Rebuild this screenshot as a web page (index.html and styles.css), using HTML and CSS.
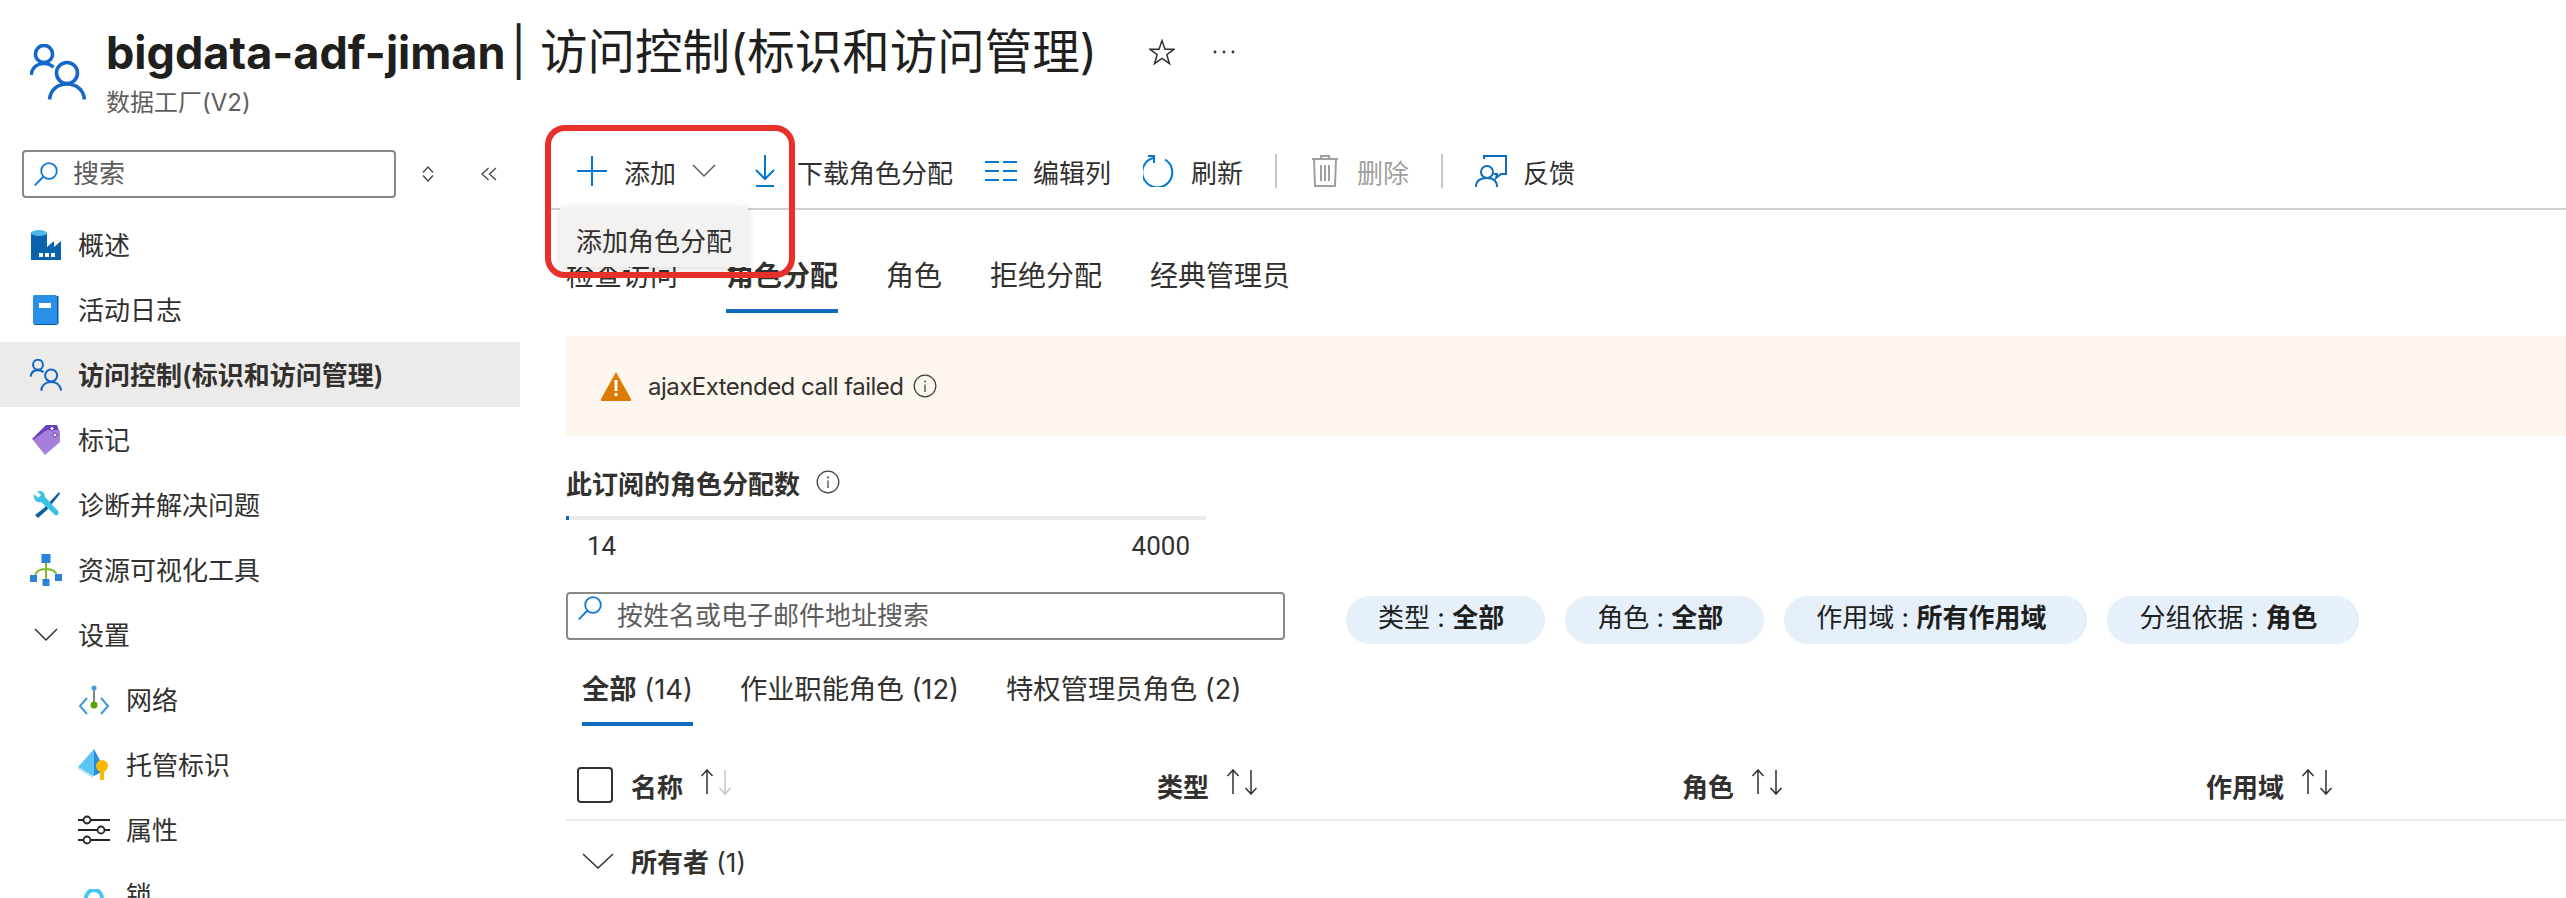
FILE: index.html
```html
<!DOCTYPE html>
<html lang="zh-CN">
<head>
<meta charset="utf-8">
<title>bigdata-adf-jiman | 访问控制(标识和访问管理)</title>
<link rel="stylesheet" href="styles.css">
</head>
<body>
<svg class="defs" width="0" height="0" aria-hidden="true">
  <symbol id="people" viewBox="0 0 56 56">
    <g fill="none" stroke="#1267c9" stroke-width="3.6" stroke-linecap="butt">
      <circle cx="14" cy="10" r="8.6"/>
      <path d="M1 31c1-7 6-11.500 13-11.500 4 0 7 1.300 9.500 3.800"/>
      <circle cx="37" cy="29" r="10.500"/>
      <path d="M19.500 55.500c1-9.500 8-15.500 17.500-15.500s16.500 6 17.500 15.500"/>
    </g>
  </symbol>
  <symbol id="mag" viewBox="0 0 24 24">
    <g fill="none" stroke="#0f78d4" stroke-width="1.800">
      <circle cx="15" cy="9" r="7.800"/>
      <path d="M9.500 14.500 .8 23.400"/>
    </g>
  </symbol>
  <symbol id="info" viewBox="0 0 24 24">
    <circle cx="12" cy="12" r="10.800" fill="none" stroke="#444" stroke-width="1.300"/>
    <path d="M12 10.500v7.500" stroke="#444" stroke-width="1.300"/>
    <circle cx="12" cy="7.500" r="1" fill="#444"/>
  </symbol>
  <symbol id="sort" viewBox="0 0 34 26">
    <path d="M8 25V1M2.500 7 8 1l5.500 6" fill="none" stroke="#323130" stroke-width="1.500"/>
    <path d="M26 1v24M20.500 19 26 25l5.500-6" fill="none" stroke="#323130" stroke-width="1.500"/>
  </symbol>
  <symbol id="sortdim" viewBox="0 0 34 26">
    <path d="M8 25V1M2.500 7 8 1l5.500 6" fill="none" stroke="#323130" stroke-width="1.500"/>
    <path d="M26 1v24M20.500 19 26 25l5.500-6" fill="none" stroke="#c8c6c4" stroke-width="1.500"/>
  </symbol>
</svg>

<div class="page">
  <header class="head">
    <svg class="head-icon"><use href="#people"/></svg>
    <div class="head-text">
      <div class="title-row">
        <h1 class="title"><b>bigdata-adf-jiman</b> | 访问控制(标识和访问管理)</h1>
        <svg class="star" viewBox="0 0 26 27"><path d="M13 1.500l3 8.700h9l-7.200 5.500 2.700 9L13 19.300l-7.500 5.400 2.700-9L1 10.200h9z" fill="none" stroke="#323130" stroke-width="1.500"/></svg>
        <svg class="dots" viewBox="0 0 22 4"><circle cx="2" cy="2" r="1.400"/><circle cx="11" cy="2" r="1.400"/><circle cx="20" cy="2" r="1.400"/></svg>
      </div>
      <div class="subtitle">数据工厂(V2)</div>
    </div>
  </header>

  <div class="columns">
    <aside class="side">
      <div class="side-search-row">
        <div class="searchbox side-search">
          <svg class="mag"><use href="#mag"/></svg>
          <span class="ph">搜索</span>
        </div>
        <svg class="updown" viewBox="0 0 12 16"><path d="M1 6.500 6 1l5 5.500M1 9.500 6 15l5-5.500" fill="none" stroke="#444" stroke-width="1.300"/></svg>
        <svg class="collapse" viewBox="0 0 16 14"><path d="M7.500 1 1 7l6.500 6M15 1 8.500 7l6.500 6" fill="none" stroke="#444" stroke-width="1.300"/></svg>
      </div>
      <nav class="nav">
        <a class="nav-item">
          <span class="nav-icon"><svg width="30" height="30" viewBox="0 0 30 30"><path d="M0 3v27h30V11l-7 6v-6l-7 6V3z" fill="#0a62ac"/><ellipse cx="8" cy="3" rx="8" ry="3" fill="#4fb8e6"/><path d="M8 23h4v4H8zm6 0h4v4h-4zm6 0h4v4h-4z" fill="#fff"/></svg></span>概述
        </a>
        <a class="nav-item">
          <span class="nav-icon"><svg width="26" height="30" viewBox="0 0 26 30"><rect x="0" y="0" width="24" height="29" rx="1.500" fill="#2a8fe6"/><path d="M24 1h1.500v28l-2 1H1v-1h23z" fill="#0c5ba8"/><rect x="6" y="8" width="12" height="5" fill="#fff"/></svg></span>活动日志
        </a>
        <a class="nav-item active">
          <span class="nav-icon"><svg width="32" height="32"><use href="#people"/></svg></span>访问控制(标识和访问管理)
        </a>
        <a class="nav-item">
          <span class="nav-icon"><svg width="28" height="30" viewBox="0 0 28 30"><path d="M0 14 14 0h11l2 6L12 22z" fill="#6b3fc4"/><path d="M1 15 15 5h11c2 0 2 1 2 2v10L13 30z" fill="#a67fdc"/><circle cx="20" cy="3.500" r="2" fill="#fff" stroke="#5a32ad"/><circle cx="23" cy="10" r="2" fill="#fff" stroke="#5a32ad"/></svg></span>标记
        </a>
        <a class="nav-item">
          <span class="nav-icon"><svg width="28" height="28" viewBox="0 0 28 28"><path d="M27 1 12 17l-9 7 3 3 9-8L28 3z" fill="#0d639f"/><path d="M2 3l4 4 3-3-4-4c4-1 8 1 8 6l13 14c2 2-1 6-3 4L9 11C4 12 1 8 2 3z" fill="#3cc0e4"/></svg></span>诊断并解决问题
        </a>
        <a class="nav-item">
          <span class="nav-icon"><svg width="32" height="32" viewBox="0 0 32 32"><path d="M16 8v18M5 22c1-6 6-7 11-7s10 1 11 7" fill="none" stroke="#7fba29" stroke-width="2"/><rect x="11.500" y="0" width="9" height="9" fill="#2b82da"/><rect x="0" y="21" width="7" height="7" fill="#2b82da"/><rect x="25" y="20" width="7" height="7" fill="#2b82da"/><rect x="12.500" y="25" width="7" height="7" fill="#2b82da"/></svg></span>资源可视化工具
        </a>
        <a class="nav-item">
          <span class="nav-icon"><svg width="24" height="14" viewBox="0 0 24 14"><path d="M1 1l11 11L23 1" fill="none" stroke="#323130" stroke-width="1.500"/></svg></span>设置
        </a>
        <a class="nav-item sub">
          <span class="nav-icon"><svg width="32" height="30" viewBox="0 0 32 30"><path d="M16 3v17" stroke="#666" stroke-width="1.600"/><circle cx="16" cy="3" r="2.600" fill="#4b9fd0"/><circle cx="16" cy="20" r="3.500" fill="#57a300"/><path d="M9 13 2 21l7 8M23 13l7 8-7 8" fill="none" stroke="#3f9bd0" stroke-width="2"/></svg></span>网络
        </a>
        <a class="nav-item sub">
          <span class="nav-icon"><svg width="32" height="32" viewBox="0 0 32 32"><path d="M16 0 0 18l15 9 11-5z" fill="#5cc5f2"/><path d="M16 0v27l11-6z" fill="#2a8be0"/><path d="M0 18l15 9v2L0 20z" fill="#b3e4fa"/><circle cx="24" cy="17" r="6" fill="#fbb800"/><path d="M22 20h4v11h-4z" fill="#fbb800"/></svg></span>托管标识
        </a>
        <a class="nav-item sub">
          <span class="nav-icon"><svg width="32" height="30" viewBox="0 0 32 30"><g fill="none" stroke="#252423" stroke-width="1.800"><path d="M0 5h32M0 15h32M0 25h32"/><circle cx="9" cy="5" r="3.500" fill="#fff"/><circle cx="23" cy="15" r="3.500" fill="#fff"/><circle cx="9" cy="25" r="3.500" fill="#fff"/></g></svg></span>属性
        </a>
        <a class="nav-item sub">
          <span class="nav-icon lock"><svg width="24" height="30" viewBox="0 0 24 30"><path d="M4 14V9a8 8 0 0 1 16 0v5" fill="none" stroke="#44c8f0" stroke-width="4"/><rect x="0" y="13" width="24" height="17" rx="2" fill="#7fdcf7"/></svg></span>锁
        </a>
      </nav>
    </aside>

    <main class="main">
      <div class="toolbar">
        <button class="tool add">
          <svg class="ti" viewBox="0 0 32 32"><path d="M16 1v30M1 16h30" stroke="#0078d4" stroke-width="2" fill="none"/></svg>
          <span>添加</span>
          <svg class="chev" viewBox="0 0 24 14"><path d="M1 1l11 11L23 1" fill="none" stroke="#605e5c" stroke-width="1.500"/></svg>
        </button>
        <button class="tool">
          <svg class="ti" viewBox="0 0 32 32"><path d="M16 0v24M7 15l9 9 9-9M7 31h18" fill="none" stroke="#0078d4" stroke-width="2"/></svg>
          <span>下载角色分配</span>
        </button>
        <button class="tool">
          <svg class="ti" viewBox="0 0 32 32"><path d="M0 7h14M0 16h14M0 25h14M18 7h14M18 16h14M18 25h14" stroke="#0078d4" stroke-width="2"/></svg>
          <span>编辑列</span>
        </button>
        <button class="tool">
          <svg class="ti" viewBox="0 0 32 32"><path d="M22 4.500A15 15 0 1 1 10 3" fill="none" stroke="#0078d4" stroke-width="2"/><path d="M5 1h6v7" fill="none" stroke="#0078d4" stroke-width="2"/></svg>
          <span>刷新</span>
        </button>
        <i class="tsep"></i>
        <button class="tool off">
          <svg class="ti" viewBox="0 0 32 32"><path d="M3 4h26M12 4V1h8v3M5 4l1 27h20l1-27M12 10v16M16 10v16M20 10v16" fill="none" stroke="#a19f9d" stroke-width="2"/></svg>
          <span>删除</span>
        </button>
        <i class="tsep"></i>
        <button class="tool">
          <svg class="ti" viewBox="0 0 32 32"><g fill="none" stroke="#0f6cbd" stroke-width="2"><path d="M9 4V1h22v18h-5l-5 4 1-4h-3"/><circle cx="12" cy="17" r="6"/><path d="M1 32c0-7 5-9 11-9s10 2 10 9"/></g></svg>
          <span>反馈</span>
        </button>
      </div>

      <div class="menu">添加角色分配</div>
      <div class="callout"></div>

      <div class="tabs">
        <a class="tab">检查访问</a>
        <a class="tab on">角色分配</a>
        <a class="tab">角色</a>
        <a class="tab">拒绝分配</a>
        <a class="tab">经典管理员</a>
      </div>

      <div class="banner">
        <svg class="warn" viewBox="0 0 32 30"><path d="M16 1 31 28c.4 1 0 2-1 2H2c-1 0-1.400-1-1-2z" fill="#dd7a03"/><rect x="14.500" y="9" width="3" height="11" fill="#fff"/><rect x="14.500" y="22" width="3" height="3" fill="#fff"/></svg>
        <span class="banner-text">ajaxExtended call failed</span>
        <svg class="infoi"><use href="#info"/></svg>
      </div>

      <div class="quota-title"><b>此订阅的角色分配数</b><svg class="infoi"><use href="#info"/></svg></div>
      <div class="bar"><div class="bar-fill"></div></div>
      <div class="bar-labels"><span>14</span><span>4000</span></div>

      <div class="filters">
        <div class="searchbox main-search">
          <svg class="mag mag-hi"><use href="#mag"/></svg>
          <span class="ph">按姓名或电子邮件地址搜索</span>
        </div>
        <div class="chips">
          <span class="chip">类型 : <b>全部</b></span>
          <span class="chip">角色 : <b>全部</b></span>
          <span class="chip">作用域 : <b>所有作用域</b></span>
          <span class="chip">分组依据 : <b>角色</b></span>
        </div>
      </div>

      <div class="subtabs">
        <a class="subtab on"><b>全部</b> (14)</a>
        <a class="subtab">作业职能角色 (12)</a>
        <a class="subtab">特权管理员角色 (2)</a>
      </div>

      <div class="thead">
        <div class="th"><span class="check"></span><b>名称</b><svg class="sort"><use href="#sortdim"/></svg></div>
        <div class="th"><b>类型</b><svg class="sort"><use href="#sort"/></svg></div>
        <div class="th"><b>角色</b><svg class="sort"><use href="#sort"/></svg></div>
        <div class="th"><b>作用域</b><svg class="sort"><use href="#sort"/></svg></div>
      </div>
      <div class="group">
        <svg class="group-chev" viewBox="0 0 32 16"><path d="M1 1l15 14L31 1" fill="none" stroke="#323130" stroke-width="1.500"/></svg>
        <span><b>所有者</b> (1)</span>
      </div>
    </main>
  </div>
</div>
</body>
</html>
```

FILE: styles.css
```css
* { box-sizing: border-box; }
html, body { margin: 0; padding: 0; background: #fff; }
body {
  width: 2566px;
  height: 898px;
  overflow: hidden;
  font-family: Inter, "Noto Sans CJK SC", sans-serif;
  font-size: 26px;
  color: #323130;
}
b { font-weight: 600; }
.defs { position: absolute; }
.page { height: 898px; overflow: hidden; }

/* header */
.head { height: 150px; display: flex; padding: 24px 0 0 30px; }
.head-icon { width: 56px; height: 56px; margin-top: 20px; flex: none; }
.head-text { margin-left: 20px; }
.title-row { display: flex; align-items: center; height: 56px; }
.title { margin: 0; font-size: 47.5px; line-height: 56px; font-weight: 400; color: #201f1e; white-space: nowrap; }
.title b { margin-right: -8px; font-size: 45px; font-weight: 700; }
.star { width: 26px; height: 27px; margin-left: 52px; flex: none; }
.dots { width: 22px; height: 4px; margin-left: 38px; fill: #323130; flex: none; }
.subtitle { margin-top: 8px; font-size: 24px; line-height: 30px; color: #605e5c; }

.columns { display: flex; height: 748px; }

/* sidebar */
.side { width: 520px; flex: none; }
.side-search-row { display: flex; align-items: center; padding-left: 22px; }
.searchbox { display: flex; align-items: center; height: 48px; border: 2px solid #8a8886; border-radius: 4px; background: #fff; }
.side-search { width: 374px; padding-left: 10px; }
.mag { width: 24px; height: 24px; flex: none; }
.ph { margin: -6px 0 0 15px; color: #605e5c; }
.updown { width: 12px; height: 16px; margin-left: 26px; flex: none; }
.collapse { width: 16px; height: 14px; margin-left: 47px; flex: none; }
.nav { margin-top: 14px; }
.nav-item { display: flex; align-items: center; height: 65px; padding: 0 0 3px 30px; color: #323130; white-space: nowrap; }
.nav-item.active { background: #edebe9; font-weight: 600; }
.nav-item.sub { padding-left: 78px; }
.nav-icon { width: 32px; height: 32px; margin: 3px 16px 0 0; display: flex; align-items: center; justify-content: center; flex: none; }
.lock { align-items: flex-end; margin-top: 20px; }

/* main */
.main { position: relative; flex: 1; min-width: 0; padding-left: 46px; }
.toolbar {
  display: flex;
  align-items: center;
  gap: 32px;
  height: 60px;
  margin-left: -21px;
  padding: 0 0 16px 31px;
  border-bottom: 2px solid #d2d0ce;
}
.tool { display: flex; align-items: center; gap: 16px; height: 44px; padding: 0; border: 0; background: none; font: inherit; color: #323130; white-space: nowrap; }
.tool.add { margin-right: 1px; }
.tool.off { color: #a19f9d; }
.ti { width: 32px; height: 32px; flex: none; }
.chev { width: 24px; height: 14px; flex: none; }
.tsep { width: 2px; height: 34px; background: #c8c6c4; flex: none; }

.menu {
  position: absolute;
  left: 40px;
  top: 57px;
  width: 188px;
  height: 60px;
  padding: 5px 0 0 16px;
  line-height: 60px;
  background: #f3f2f1;
  box-shadow: 0 2px 8px rgba(0, 0, 0, .14);
  z-index: 2;
  white-space: nowrap;
}
.callout {
  position: absolute;
  left: 25px;
  top: -25px;
  width: 250px;
  height: 153px;
  border: 6px solid #e7302a;
  border-radius: 20px;
  z-index: 3;
}

.tabs { display: flex; gap: 48px; margin-top: 48px; font-size: 28px; }
.tab { height: 55px; line-height: 36px; white-space: nowrap; }
.tab.on { font-weight: 600; border-bottom: 4px solid #0f6cbd; }

.banner { display: flex; align-items: center; height: 100px; margin-top: 23px; padding-left: 34px; background: #fdf6ee; }
.warn { width: 32px; height: 30px; flex: none; }
.banner-text { margin-left: 16px; font-size: 24px; letter-spacing: -.52px; color: #323130; }
.infoi { width: 24px; height: 24px; margin-left: 10px; flex: none; }

.quota-title { display: flex; align-items: center; height: 36px; margin-top: 28px; }
.quota-title .infoi { margin-left: 16px; }
.bar { width: 640px; height: 4px; margin-top: 16px; background: #ebebeb; }
.bar-fill { width: 3px; height: 4px; background: #0f6cbd; }
.bar-labels { display: flex; justify-content: space-between; width: 640px; height: 32px; margin-top: 10px; padding: 0 16px 0 21px; line-height: 32px; font-family: Roboto, sans-serif; font-size: 26px; }

.filters { display: flex; height: 48px; margin-top: 30px; }
.main-search { width: 719px; padding-left: 10px; flex: none; }
.mag-hi { align-self: flex-start; margin-top: 2px; }
.chips { display: flex; gap: 20px; margin: 4px 0 0 61px; }
.chip { height: 48px; padding: 0 41px 0 32px; line-height: 44px; border-radius: 24px; background: #e6f0fa; white-space: pre; color: #201f1e; }

.subtabs { display: flex; gap: 47px; margin: 32px 0 0 16px; font-size: 27.3px; }
.subtab { height: 54px; line-height: 36px; white-space: nowrap; }
.subtab.on { border-bottom: 4px solid #0f6cbd; }

.thead { display: grid; grid-template-columns: 591px 525px 524px 1fr; height: 95px; padding-top: 41px; border-bottom: 2px solid #edebe9; }
.th { display: flex; align-items: center; gap: 16px; height: 36px; }
.th:first-child { padding-left: 11px; }
.check { width: 36px; height: 36px; margin-right: 2px; border: 2px solid #323130; border-radius: 4px; flex: none; }
.sort { width: 34px; height: 26px; margin-top: -6px; flex: none; }

.group { display: flex; align-items: center; gap: 17px; height: 36px; margin-top: 21px; padding-left: 16px; }
.group-chev { width: 32px; height: 16px; margin-top: 2px; flex: none; }
```
